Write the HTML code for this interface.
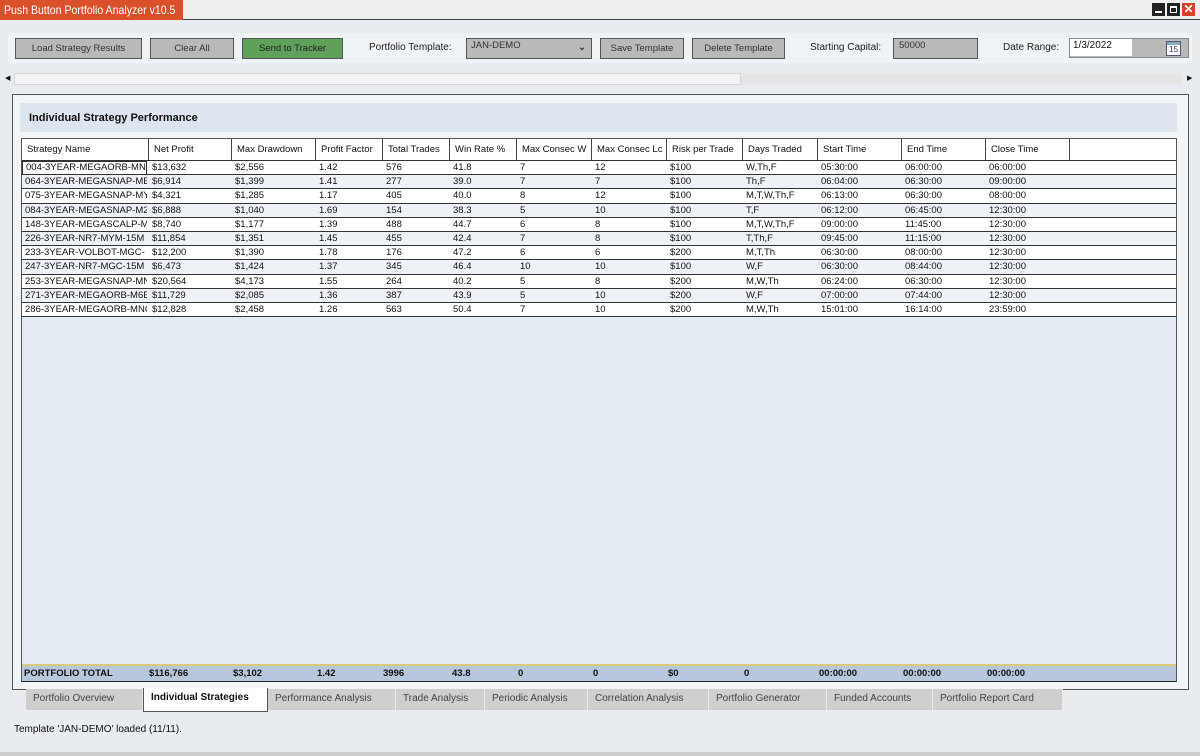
<!DOCTYPE html>
<html><head><meta charset="utf-8"><style>
*{box-sizing:border-box;margin:0;padding:0}
body{width:1200px;height:756px;background:#e8ecf0;font-family:"Liberation Sans",sans-serif;position:relative;overflow:hidden;font-size:10px;color:#111}
.abs{position:absolute;white-space:nowrap}
.btn{position:absolute;top:38px;height:21px;border:1px solid #555;background:#b9b9b9;font-size:9.5px;color:#333;text-align:center;line-height:19px;white-space:nowrap}
.lbl{position:absolute;top:42px;font-size:10px;color:#222;white-space:nowrap}
.grid{position:absolute;left:21px;top:138px;width:1156px;height:544px;border:1px solid #555;background:#e4ebf2}
.hdr{position:absolute;left:0;top:0;height:22px;width:1154px;background:#fff;border-bottom:1px solid #333}
.hdr div{position:absolute;top:0;height:21px;border-right:1px solid #444;padding-left:5px;line-height:22px;font-size:9.5px;white-space:nowrap;overflow:hidden}
.row{position:absolute;left:0;width:1154px;height:14.2px;border-bottom:1px solid #333;font-size:9.5px;line-height:14px}
.row div{position:absolute;top:0;padding-left:3px;white-space:nowrap;overflow:hidden}
.tot{position:absolute;left:0;top:525px;width:1154px;height:18px;background:#b8c8dc;border-top:2px solid #d8cc7a;border-bottom:1px solid #222;font-weight:bold;font-size:9.5px;line-height:16px}
.tot div{position:absolute;top:0;white-space:nowrap}
.tab{position:absolute;top:689px;height:21px;background:#cfcfcf;border-right:1px solid #e8e8e8;font-size:10px;color:#444;line-height:20px;padding-left:7px;white-space:nowrap;overflow:hidden}
</style></head><body>
<div class="abs" style="left:0;top:0;width:1200px;height:20px;background:#efefef;border-bottom:1px solid #444"></div>
<div class="abs" style="left:0;top:0;width:183px;height:20px;background:#d9502a;color:#fff;font-size:12px;line-height:20px;padding-left:4px;overflow:hidden"><span style="display:inline-block;transform:scaleX(0.88);transform-origin:left">Push Button Portfolio Analyzer v10.5</span></div>
<div class="abs" style="left:1152px;top:3px;width:13px;height:13px;background:#222"><div class="abs" style="left:3px;top:8px;width:7px;height:2px;background:#fff"></div></div>
<div class="abs" style="left:1167px;top:3px;width:13px;height:13px;background:#222"><div class="abs" style="left:3px;top:3px;width:7px;height:7px;border:1.5px solid #fff;border-top-width:2.5px"></div></div>
<div class="abs" style="left:1182px;top:3px;width:13px;height:13px;background:#d9402a;color:#fff;font-weight:bold;font-size:12px;line-height:13px;text-align:center">✕</div>
<div class="abs" style="left:8px;top:33px;width:1184px;height:30px;background:#f0f3f6"></div>
<div class="btn" style="left:15px;width:127px">Load Strategy Results</div>
<div class="btn" style="left:150px;width:84px">Clear All</div>
<div class="btn" style="left:242px;width:101px;background:#5fa05a;color:#222">Send to Tracker</div>
<div class="lbl" style="left:369px">Portfolio Template:</div>
<div class="btn" style="left:466px;width:126px;text-align:left;padding-left:4px;line-height:14px">JAN-DEMO<span style="position:absolute;right:5px;top:2px;font-weight:bold">⌄</span></div>
<div class="btn" style="left:600px;width:84px">Save Template</div>
<div class="btn" style="left:692px;width:93px">Delete Template</div>
<div class="lbl" style="left:810px">Starting Capital:</div>
<div class="btn" style="left:893px;width:85px;text-align:left;padding-left:5px;line-height:14px">50000</div>
<div class="lbl" style="left:1003px">Date Range:</div>
<div class="abs" style="left:1069px;top:38px;width:120px;height:20px;background:#b9b9b9;border:1px solid #888"></div>
<div class="abs" style="left:1070px;top:39px;width:62px;height:17px;background:#fff;font-size:10px;padding:1px 3px">1/3/2022</div>
<div class="abs" style="left:1166px;top:41px;width:15px;height:15px;border:1px solid #557;background:#fff;font-size:8px;text-align:center;line-height:16px;color:#335">15<div class="abs" style="left:0;top:0;width:13px;height:3px;background:#8ab"></div></div>
<div class="abs" style="left:14px;top:73px;width:727px;height:12px;background:#f3f3f3;border:1px solid #d6d6d6"></div>
<div class="abs" style="left:741px;top:73px;width:441px;height:12px;background:#e6e6e6"></div>
<div class="abs" style="left:5px;top:74px;font-size:7px">◀</div>
<div class="abs" style="left:1187px;top:74px;font-size:7px">▶</div>
<div class="abs" style="left:12px;top:94px;width:1177px;height:596px;border:1px solid #555;background:#f1f5f8"></div>
<div class="abs" style="left:20px;top:103px;width:1157px;height:29px;background:#dde5ee;font-weight:bold;font-size:11px;line-height:30px;padding-left:9px">Individual Strategy Performance</div>
<div class="grid">
<div class="hdr">
<div style="left:0;width:127px">Strategy Name</div><div style="left:127px;width:83px">Net Profit</div><div style="left:210px;width:84px">Max Drawdown</div><div style="left:294px;width:67px">Profit Factor</div><div style="left:361px;width:67px">Total Trades</div><div style="left:428px;width:67px">Win Rate %</div><div style="left:495px;width:75px">Max Consec W</div><div style="left:570px;width:75px">Max Consec Lc</div><div style="left:645px;width:76px">Risk per Trade</div><div style="left:721px;width:75px">Days Traded</div><div style="left:796px;width:84px">Start Time</div><div style="left:880px;width:84px">End Time</div><div style="left:964px;width:84px">Close Time</div>
</div>
<div id="rows"></div>
<div class="tot">
<div style="left:2px">PORTFOLIO TOTAL</div><div style="left:127px">$116,766</div><div style="left:211px">$3,102</div><div style="left:295px">1.42</div><div style="left:361px">3996</div><div style="left:430px">43.8</div><div style="left:496px">0</div><div style="left:571px">0</div><div style="left:646px">$0</div><div style="left:722px">0</div><div style="left:797px">00:00:00</div><div style="left:881px">00:00:00</div><div style="left:965px">00:00:00</div>
</div>
</div>
<div class="abs" style="left:26px;top:689px;width:1037px;height:21px;background:#cfcfcf"></div>
<div class="tab" style="left:26px;width:117px">Portfolio Overview</div>
<div class="tab" style="left:143px;width:125px;top:688px;height:24px;background:#fff;border:1px solid #555;border-top:none;font-weight:bold;color:#111">Individual Strategies</div>
<div class="tab" style="left:268px;width:128px">Performance Analysis</div>
<div class="tab" style="left:396px;width:89px">Trade Analysis</div>
<div class="tab" style="left:485px;width:103px">Periodic Analysis</div>
<div class="tab" style="left:588px;width:121px">Correlation Analysis</div>
<div class="tab" style="left:709px;width:118px">Portfolio Generator</div>
<div class="tab" style="left:827px;width:106px">Funded Accounts</div>
<div class="tab" style="left:933px;width:130px">Portfolio Report Card</div>
<div class="abs" style="left:14px;top:724px;font-size:10px">Template 'JAN-DEMO' loaded (11/11).</div>
<div class="abs" style="left:0;top:752px;width:1200px;height:4px;background:#ccc"></div>
<script>
var d=[["004-3YEAR-MEGAORB-MNQ","$13,632","$2,556","1.42","576","41.8","7","12","$100","W,Th,F","05:30:00","06:00:00","06:00:00"],
["064-3YEAR-MEGASNAP-MES","$6,914","$1,399","1.41","277","39.0","7","7","$100","Th,F","06:04:00","06:30:00","09:00:00"],
["075-3YEAR-MEGASNAP-MYM","$4,321","$1,285","1.17","405","40.0","8","12","$100","M,T,W,Th,F","06:13:00","06:30:00","08:00:00"],
["084-3YEAR-MEGASNAP-M2K","$6,888","$1,040","1.69","154","38.3","5","10","$100","T,F","06:12:00","06:45:00","12:30:00"],
["148-3YEAR-MEGASCALP-MNQ","$8,740","$1,177","1.39","488","44.7","6","8","$100","M,T,W,Th,F","09:00:00","11:45:00","12:30:00"],
["226-3YEAR-NR7-MYM-15M","$11,854","$1,351","1.45","455","42.4","7","8","$100","T,Th,F","09:45:00","11:15:00","12:30:00"],
["233-3YEAR-VOLBOT-MGC-","$12,200","$1,390","1.78","176","47.2","6","6","$200","M,T,Th","06:30:00","08:00:00","12:30:00"],
["247-3YEAR-NR7-MGC-15M","$6,473","$1,424","1.37","345","46.4","10","10","$100","W,F","06:30:00","08:44:00","12:30:00"],
["253-3YEAR-MEGASNAP-MNQ","$20,564","$4,173","1.55","264","40.2","5","8","$200","M,W,Th","06:24:00","06:30:00","12:30:00"],
["271-3YEAR-MEGAORB-M6E","$11,729","$2,085","1.36","387","43.9","5","10","$200","W,F","07:00:00","07:44:00","12:30:00"],
["286-3YEAR-MEGAORB-MNQ","$12,828","$2,458","1.26","563","50.4","7","10","$200","M,W,Th","15:01:00","16:14:00","23:59:00"]];
var L=[0,127,210,294,361,428,495,570,645,721,796,880,964],W=[127,83,84,67,67,67,75,75,76,75,84,84,84];
var h="";d.forEach(function(r,i){h+='<div class="row" style="top:'+(22+i*14.2)+'px;background:'+(i%2?'#eef2f6':'#fff')+'">';r.forEach(function(c,j){h+='<div style="left:'+L[j]+'px;width:'+(W[j]-2)+'px;'+(j==0&&i==0?'border:1px solid #333;line-height:12px;':'')+'">'+c+'</div>'});h+='</div>'});
document.getElementById('rows').innerHTML=h;
</script>
</body></html>
